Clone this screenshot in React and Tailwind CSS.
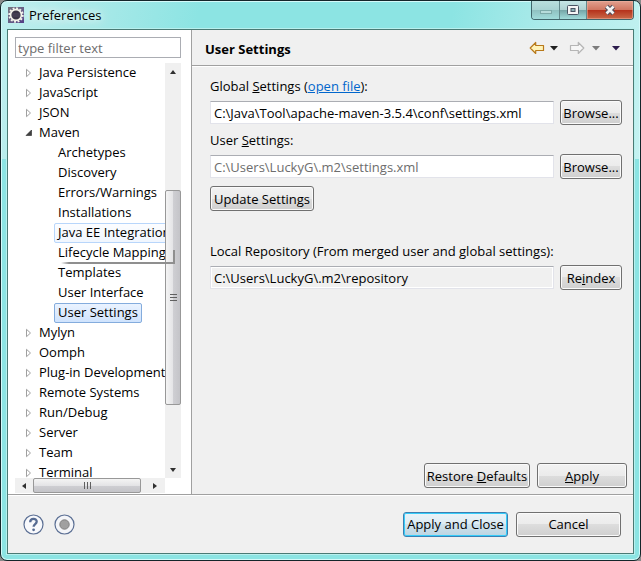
import React, { useState } from 'react';

const treeItems = [
    { label: 'Java Persistence' },
    { label: 'JavaScript' },
    { label: 'JSON' },
    {
        label: 'Maven',
        open: true,
        children: [
            'Archetypes',
            'Discovery',
            'Errors/Warnings',
            'Installations',
            'Java EE Integration',
            'Lifecycle Mappings',
            'Templates',
            'User Interface',
            'User Settings',
        ],
    },
    { label: 'Mylyn' },
    { label: 'Oomph' },
    { label: 'Plug-in Development' },
    { label: 'Remote Systems' },
    { label: 'Run/Debug' },
    { label: 'Server' },
    { label: 'Team' },
    { label: 'Terminal' },
];

const buttonBase = 'h-[25px] shrink-0 rounded-[3px] border whitespace-nowrap flex items-center justify-center leading-5';
const buttonGray = 'border-[#707070] bg-[linear-gradient(#f2f2f2,#ebebeb_50%,#dddddd_50%,#cfcfcf)] shadow-[inset_0_0_0_1px_#fafafa]';
const buttonBlue = 'border-[#3c7fb1] bg-[linear-gradient(#eaf3f8,#dcebf3_50%,#cfe2ec_50%,#bcd5e2)] shadow-[inset_0_0_0_1px_#36cdfa]';

function Button({ primary, className, children }) {
    return (
        <button type="button" className={`${buttonBase} ${primary ? buttonBlue : buttonGray} ${className}`}>
            {children}
        </button>
    );
}

function Triangle({ dir, color = '#303030' }) {
    const points = {
        up: '1,6 4,2 7,6',
        down: '1,2 7,2 4,6',
        left: '6,1 2,4 6,7',
        right: '2,1 6,4 2,7',
    };
    return (
        <svg width="8" height="8" viewBox="0 0 8 8">
            <polygon points={points[dir]} fill={color} />
        </svg>
    );
}

function MenuTriangle({ color }) {
    return (
        <svg width="10" height="8" viewBox="0 0 10 8">
            <polygon points="1,2 9,2 5,6.5" fill={color} />
        </svg>
    );
}

function TreeArrow({ open }) {
    return (
        <svg width="8" height="10" viewBox="0 0 8 10" className="shrink-0">
            {open ? (
                <polygon points="6.5,2 6.5,7.5 1,7.5" fill="#404040" stroke="#262626" strokeWidth="0.6" />
            ) : (
                <polygon points="1.5,1.3 5.5,5 1.5,8.7" fill="#fff" stroke="#a0a0a0" />
            )}
        </svg>
    );
}

function EclipseIcon() {
    return (
        <svg width="16" height="16" viewBox="0 0 16 16">
            <defs>
                <linearGradient id="eclipse" x1="0" y1="0" x2="1" y2="1">
                    <stop offset="0" stopColor="#77767f" />
                    <stop offset="0.5" stopColor="#665f85" />
                    <stop offset="1" stopColor="#4f3a85" />
                </linearGradient>
            </defs>
            <rect width="16" height="16" fill="url(#eclipse)" />
            <circle cx="8" cy="8" r="6.7" fill="none" stroke="#f4f4ec" strokeWidth="2" strokeDasharray="1.9 1.6" />
            <circle cx="8" cy="8" r="5.4" fill="#393546" stroke="#f4f4ec" strokeWidth="1.6" />
            <path d="M4 7h8M4 9h8" stroke="#57516a" strokeWidth="0.7" />
        </svg>
    );
}

function HistoryArrow({ back }) {
    return (
        <svg width="16" height="14" viewBox="0 0 16 14" className={back ? '' : '-scale-x-100'}>
            <path
                d="M1.2 7 6.7 1.5V4.5H14.5V9.5H6.7V12.5Z"
                fill={back ? '#fff3b8' : '#f6f6f6'}
                stroke={back ? '#b8791a' : '#b5b5b5'}
                strokeWidth="1.2"
                strokeLinejoin="round"
            />
        </svg>
    );
}

function TitleBar() {
    return (
        <header className="flex h-[28px] shrink-0 items-start justify-between pl-px">
            <div className="flex items-center gap-[5px] pt-1">
                <EclipseIcon />
                <h1 className="leading-5 [text-shadow:0_0_8px_#fff,0_0_12px_#fff]">Preferences</h1>
            </div>
            <div className="flex h-[19px] overflow-hidden rounded-b-[4px] border border-t-0 border-[#40666b]">
                <button type="button" aria-label="Minimize" className="flex w-7 items-center justify-center border-r border-[#63898c] bg-[linear-gradient(#b9dfde,#a8d3d3_50%,#8fc0c0_50%,#a1dcdb)]">
                    <svg width="14" height="14" viewBox="0 0 14 14">
                        <rect x="1.5" y="7.5" width="11" height="3" fill="#b7dcdb" stroke="#7daaa9" />
                    </svg>
                </button>
                <button type="button" aria-label="Maximize" className="flex w-[27px] items-center justify-center border-r border-[#63898c] bg-[linear-gradient(#c6e6e6,#aed1d1_50%,#74a4a6_50%,#a1dcdb)]">
                    <svg width="14" height="14" viewBox="0 0 14 14">
                        <rect x="1.5" y="2.5" width="11" height="9" rx="1" fill="#f5f5f5" stroke="#4a5564" />
                        <rect x="5" y="5.5" width="4" height="3" fill="#8cb4b6" stroke="#4a5564" />
                    </svg>
                </button>
                <button type="button" aria-label="Close" className="flex w-[46px] items-center justify-center bg-[linear-gradient(#e2a08f,#d07560_50%,#b5301a_50%,#c96a48)] shadow-[inset_0_0_0_1px_#f0b5a580]">
                    <svg width="14" height="14" viewBox="0 0 14 14">
                        <path d="M3.5 3.5l7 7M10.5 3.5l-7 7" stroke="#4e4c5a" strokeWidth="4.6" />
                        <path d="M3.5 3.5l7 7M10.5 3.5l-7 7" stroke="#f4f4f4" strokeWidth="2.7" />
                    </svg>
                </button>
            </div>
        </header>
    );
}

function TreeRow({ item }) {
    return (
        <li>
            <div className="flex h-5 items-center gap-1.5 pl-2.5">
                <TreeArrow open={item.open} />
                <span>{item.label}</span>
            </div>
            {item.children && (
                <ul>
                    {item.children.map((child) => (
                        <ChildRow key={child} label={child} />
                    ))}
                </ul>
            )}
        </li>
    );
}

function ChildRow({ label }) {
    let look = 'border-transparent';
    if (label === 'User Settings') look = 'border-[#84acdd] bg-[linear-gradient(#eaf3ff,#cfe3fd)]';
    if (label === 'Java EE Integration') look = 'border-[#b8d6fb] bg-[linear-gradient(#fcfdff,#f0f6fe)]';
    return (
        <li className="flex h-5 pl-[39px]">
            <span className={`flex items-center rounded-[2px] border px-[3px] ${look}`}>{label}</span>
        </li>
    );
}

function Sidebar() {
    const [filter, setFilter] = useState('');

    return (
        <aside className="flex w-[184px] shrink-0 flex-col border-r border-[#a0a0a0] bg-white pt-[7px] pb-px pl-[7px]">
            <input
                type="text"
                aria-label="Filter"
                placeholder="type filter text"
                value={filter}
                onChange={(e) => setFilter(e.target.value)}
                className="mb-[5px] h-[21px] w-[166px] shrink-0 border border-[#abadb3] bg-white px-0.5 outline-none placeholder:text-[#6d6d6d]"
            />
            <div className="relative flex min-h-0 flex-1">
                <ul className="w-[150px] overflow-hidden whitespace-nowrap">
                    {treeItems.map((item) => (
                        <TreeRow key={item.label} item={item} />
                    ))}
                </ul>
                <div className="flex w-4 flex-col items-center bg-[#f0f0f0]">
                    <div className="flex h-[17px] w-full items-center justify-center"><Triangle dir="up" /></div>
                    <div className="h-[110px] shrink-0" />
                    <div className="flex w-full flex-1 flex-col items-center justify-center gap-0.5 rounded-[2px] border border-[#989898] bg-[linear-gradient(90deg,#f4f4f4,#e4e4e6_50%,#cfcfd3_50%,#c4c4c8)]">
                        <i className="h-px w-[7px] bg-[#606060]" />
                        <i className="h-px w-[7px] bg-[#606060]" />
                        <i className="h-px w-[7px] bg-[#606060]" />
                    </div>
                    <div className="h-[56px] shrink-0" />
                    <div className="flex h-[17px] w-full items-center justify-center"><Triangle dir="down" /></div>
                </div>
                {/* shadow left by the hover tooltip */}
                <div className="absolute top-[187px] left-[46px] h-[14px] w-[114px] border-r-2 border-b-2 border-[#8f8f8f] shadow-[1px_1px_1px_#c8c8c8] [mask-image:linear-gradient(90deg,transparent,#000_8px)]" />
            </div>
            <div className="flex h-[15px] w-[150px] shrink-0 items-stretch bg-[#f0f0f0]">
                <div className="flex w-[18px] items-center justify-center"><Triangle dir="left" /></div>
                <div className="flex w-[108px] items-center justify-center gap-0.5 rounded-[2px] border border-[#989898] bg-[linear-gradient(#f4f4f4,#e4e4e6_50%,#cfcfd3_50%,#c4c4c8)]">
                    <i className="h-[7px] w-px bg-[#606060]" />
                    <i className="h-[7px] w-px bg-[#606060]" />
                    <i className="h-[7px] w-px bg-[#606060]" />
                </div>
                <div className="flex flex-1 items-center justify-center pl-1"><Triangle dir="right" /></div>
            </div>
        </aside>
    );
}

const fieldBase = 'h-[23px] min-w-0 flex-1 border border-[#e2e3ea] border-t-[#abadb3] px-[3px] outline-none';

function SettingsPage() {
    return (
        <main className="flex min-w-0 flex-1 flex-col">
            <div className="flex h-9 shrink-0 items-center justify-between border-b border-[#a0a0a0] pr-3 pl-[13px] shadow-[0_1px_0_#fff]">
                <h2 className="pt-1 font-bold">User Settings</h2>
                <div className="flex items-center">
                    <button type="button" aria-label="Back"><HistoryArrow back /></button>
                    <button type="button" aria-label="Back history" className="ml-1"><MenuTriangle color="#202020" /></button>
                    <button type="button" aria-label="Forward" className="ml-2.5"><HistoryArrow /></button>
                    <button type="button" aria-label="Forward history" className="ml-1.5"><MenuTriangle color="#7c7c7c" /></button>
                    <button type="button" aria-label="Menu" className="ml-2.5"><MenuTriangle color="#2c1c4c" /></button>
                </div>
            </div>

            <div className="flex flex-col pt-2.5 pr-[11px] pl-[18px]">
                <label htmlFor="global" className="leading-5">
                    Global <u>S</u>ettings (<a href="#open" className="text-[#0066cc] underline">open file</a>):
                </label>
                <div className="mt-1 flex items-center gap-1.5">
                    <input id="global" type="text" defaultValue="C:\Java\Tool\apache-maven-3.5.4\conf\settings.xml" className={`${fieldBase} bg-white`} />
                    <Button className="w-[62px]">Browse...</Button>
                </div>

                <label htmlFor="user" className="mt-[5px] leading-5">User <u>S</u>ettings:</label>
                <div className="mt-1 flex items-center gap-1.5">
                    <input id="user" type="text" placeholder="C:\Users\LuckyG\.m2\settings.xml" className={`${fieldBase} bg-white placeholder:text-[#6d6d6d]`} />
                    <Button className="w-[62px]">Browse...</Button>
                </div>

                <Button className="mt-[7px] w-[104px]">Update Settings</Button>

                <label htmlFor="repo" className="mt-[30px] leading-5">Local Repository (From merged user and global settings):</label>
                <div className="mt-1 flex items-center gap-1.5">
                    <input id="repo" type="text" readOnly value="C:\Users\LuckyG\.m2\repository" className={`${fieldBase} bg-[#f0f0f0] shadow-[inset_0_0_0_1px_#fff]`} />
                    <Button className="w-[62px]"><span>Re<u>i</u>ndex</span></Button>
                </div>
            </div>

            <div className="mt-auto flex justify-end gap-[7px] pr-1.5 pb-1.5">
                <Button className="w-[106px]"><span>Restore <u>D</u>efaults</span></Button>
                <Button className="w-[90px]"><span><u>A</u>pply</span></Button>
            </div>
        </main>
    );
}

function Footer() {
    return (
        <footer className="flex h-[59px] shrink-0 items-center justify-between border-t border-[#a0a0a0] pr-3 pl-[15px] shadow-[inset_0_1px_0_#fff]">
            <div className="flex gap-2.5">
                <button type="button" aria-label="Help">
                    <svg width="21" height="21" viewBox="0 0 21 21">
                        <circle cx="10.5" cy="10.5" r="9.5" fill="#f8f9fc" stroke="#5b6f94" strokeWidth="1.2" />
                        <path d="M7.2 8.2C7.2 3.6 14 3.9 13.7 7.7C13.5 10.2 10.6 10 10.6 12.8" fill="none" stroke="#566b92" strokeWidth="2.3" />
                        <circle cx="10.6" cy="15.8" r="1.4" fill="#566b92" />
                    </svg>
                </button>
                <button type="button" aria-label="Oomph recorder">
                    <svg width="21" height="21" viewBox="0 0 21 21">
                        <circle cx="10.5" cy="10.5" r="9.5" fill="#f4f5f8" stroke="#5b6f94" strokeWidth="1.2" />
                        <circle cx="10.5" cy="10.5" r="4.7" fill="#a0a0a0" stroke="#808080" />
                    </svg>
                </button>
            </div>
            <div className="flex gap-2">
                <Button primary className="w-[105px]">Apply and Close</Button>
                <Button className="w-[105px]">Cancel</Button>
            </div>
        </footer>
    );
}

function App() {
    return (
        <div className="h-screen bg-[#8a8a8a] font-['Open_Sans','Noto_Sans',sans-serif] text-[13px] text-black">
            <div className="flex h-full flex-col rounded-[7px] border border-[#14262a] bg-[linear-gradient(100deg,#c0efef_0,#a9e9e8_14%,#8ce4e3_30%,#8ce4e3_68%,#aeebea_84%,#c4f2f1_100%)] bg-[#8ce4e3] bg-[length:100%_158px] bg-no-repeat px-[6px] pb-[6px] shadow-[inset_0_0_0_1px_#d4fafa]">
                <TitleBar />
                <div className="flex min-h-0 flex-1 flex-col border border-[#4a7a74] bg-[#f0f0f0] shadow-[0_0_0_1px_#b8f0ee]">
                    <div className="flex min-h-0 flex-1">
                        <Sidebar />
                        <SettingsPage />
                    </div>
                    <Footer />
                </div>
            </div>
        </div>
    );
}

export default App;
